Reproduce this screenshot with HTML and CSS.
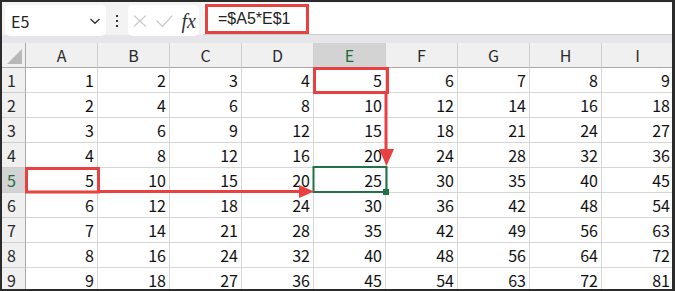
FILE: index.html
```html
<!DOCTYPE html>
<html lang="ja">
<head>
  <meta charset="UTF-8" />
  <title>E5 - 掛け算表</title>
  <link rel="stylesheet" href="styles.css">
</head>
<body>
  <div class="window">
    <div class="toolbar">
      <div class="namebox">
        <span>E5</span>
        <svg class="chevron" width="12" height="8" viewBox="0 0 12 8"><path d="M1.5 2l4.5 4.2L10.5 2" fill="none" stroke="#333" stroke-width="1.4"/></svg>
      </div>
      <div class="grip">
        <svg width="4" height="12" viewBox="0 0 4 12"><rect x="1" y="0" width="2" height="2"/><rect x="1" y="5" width="2" height="2"/><rect x="1" y="10" width="2" height="2"/></svg>
      </div>
      <div class="fxbox">
        <svg width="14" height="12" viewBox="0 0 14 12"><path d="M1 0.5l12 11M13 0.5l-12 11" fill="none" stroke="#c3c3c3" stroke-width="1.2"/></svg>
        <svg width="17" height="12" viewBox="0 0 17 12"><path d="M0.5 5.5l6 6L16.5 0.5" fill="none" stroke="#c3c3c3" stroke-width="1.2"/></svg>
        <span class="fx">fx</span>
      </div>
      <div class="formula">
        <span class="formula-text">=$A5*E$1</span>
      </div>
    </div>
    <div class="band"></div>

    <div class="grid">
      <div class="hd corner"><svg width="16" height="16" viewBox="0 0 16 16"><path d="M0 15L15 0V15Z" fill="#b8b8b8"/></svg></div>
      <div class="hd col">A</div><div class="hd col">B</div><div class="hd col">C</div><div class="hd col">D</div><div class="hd col sel">E</div><div class="hd col">F</div><div class="hd col">G</div><div class="hd col">H</div><div class="hd col">I</div>

      <div class="hd row">1</div><div class="c">1</div><div class="c">2</div><div class="c">3</div><div class="c">4</div><div class="c">5</div><div class="c">6</div><div class="c">7</div><div class="c">8</div><div class="c">9</div>
      <div class="hd row">2</div><div class="c">2</div><div class="c">4</div><div class="c">6</div><div class="c">8</div><div class="c">10</div><div class="c">12</div><div class="c">14</div><div class="c">16</div><div class="c">18</div>
      <div class="hd row">3</div><div class="c">3</div><div class="c">6</div><div class="c">9</div><div class="c">12</div><div class="c">15</div><div class="c">18</div><div class="c">21</div><div class="c">24</div><div class="c">27</div>
      <div class="hd row">4</div><div class="c">4</div><div class="c">8</div><div class="c">12</div><div class="c">16</div><div class="c">20</div><div class="c">24</div><div class="c">28</div><div class="c">32</div><div class="c">36</div>
      <div class="hd row sel">5</div><div class="c">5</div><div class="c">10</div><div class="c">15</div><div class="c">20</div><div class="c">25</div><div class="c">30</div><div class="c">35</div><div class="c">40</div><div class="c">45</div>
      <div class="hd row">6</div><div class="c">6</div><div class="c">12</div><div class="c">18</div><div class="c">24</div><div class="c">30</div><div class="c">36</div><div class="c">42</div><div class="c">48</div><div class="c">54</div>
      <div class="hd row">7</div><div class="c">7</div><div class="c">14</div><div class="c">21</div><div class="c">28</div><div class="c">35</div><div class="c">42</div><div class="c">49</div><div class="c">56</div><div class="c">63</div>
      <div class="hd row">8</div><div class="c">8</div><div class="c">16</div><div class="c">24</div><div class="c">32</div><div class="c">40</div><div class="c">48</div><div class="c">56</div><div class="c">64</div><div class="c">72</div>
      <div class="hd row">9</div><div class="c">9</div><div class="c">18</div><div class="c">27</div><div class="c">36</div><div class="c">45</div><div class="c">54</div><div class="c">63</div><div class="c">72</div><div class="c">81</div>
    </div>

    <!-- selection + red annotation arrows drawn over the sheet -->
    <svg class="marks" width="675" height="291" viewBox="0 0 675 291">
      <rect x="313.5" y="167" width="73" height="25" fill="none" stroke="#217346" stroke-width="2"/>
      <rect x="383" y="189" width="6" height="6" fill="#217346"/>
      <g fill="none" stroke="#e8413f" stroke-width="3">
        <rect x="314.5" y="68.5" width="73" height="24"/>
        <rect x="26.5" y="168.5" width="72" height="23.5"/>
        <path d="M386 93V151"/>
        <path d="M98 191.5H301"/>
      </g>
      <g fill="#e8413f">
        <path d="M379 149H394L386.5 166Z"/>
        <path d="M299 185V198L314 191.5Z"/>
      </g>
    </svg>
  </div>
</body>
</html>
```

FILE: styles.css
```css
*{box-sizing:border-box}
body{margin:0;background:#fff;font-family:'Noto Sans CJK JP','Liberation Sans',sans-serif;color:#222}
.window{position:relative;width:675px;height:291px;border:2px solid #2b2b2b;border-right-width:3px;overflow:hidden;background:#fff}

.toolbar{display:flex;align-items:flex-start;height:33px;padding-top:1px;background:#f3f3f3}
.namebox{display:flex;align-items:center;justify-content:space-between;width:101px;height:31px;margin:2px 0 0 3px;padding:0 5px 0 6px;background:#fff;border-radius:5px;font-size:16px;line-height:1}
.chevron{margin-top:1px}
.grip{width:22px;height:31px;margin-top:2px;display:flex;align-items:center;justify-content:center;fill:#333}
.fxbox{display:flex;align-items:center;gap:9px;width:71px;height:31px;margin-top:2px;padding:0 3px 0 5px;background:#fff;border-radius:5px}
.fx{font-family:'Liberation Serif',serif;font-style:italic;font-size:20px;color:#333;line-height:1;margin-left:0}
.formula{flex:1;height:32px;margin-left:4px;background:#fff;border-bottom:1px solid #cdcdcd;padding:1px 0 0 2px}
.formula-text{display:inline-block;width:104px;height:30px;border:3px solid #e8413f;padding-left:10px;font-family:'Liberation Sans',sans-serif;font-size:16px;line-height:24px;color:#222}
.band{height:8px;background:#e6e6ea}

.grid{display:grid;grid-template-columns:24px repeat(9,72px);grid-template-rows:25px repeat(9,25px)}
.grid > div{border-right:1px solid #d6d6d6;border-bottom:1px solid #d6d6d6;font-size:16px;line-height:24px;white-space:nowrap}
.c{text-align:right;padding-right:3px;color:#111}
.hd{background:#f0f0f0;color:#2a2a2a}
.hd.col{text-align:center;border-right-color:#cfcfcf;border-bottom-color:#a9a9a9}
.hd.row{padding-left:5px;border-right-color:#a9a9a9;border-bottom-color:#cfcfcf}
.hd.corner{border-right-color:#a9a9a9;border-bottom-color:#a9a9a9;display:flex;align-items:flex-end;justify-content:flex-end;padding:0 2px 2px 0}
.hd.sel{background:#d3d3d3;color:#1e6b40}

.marks{position:absolute;left:-2px;top:-2px;pointer-events:none}
```
